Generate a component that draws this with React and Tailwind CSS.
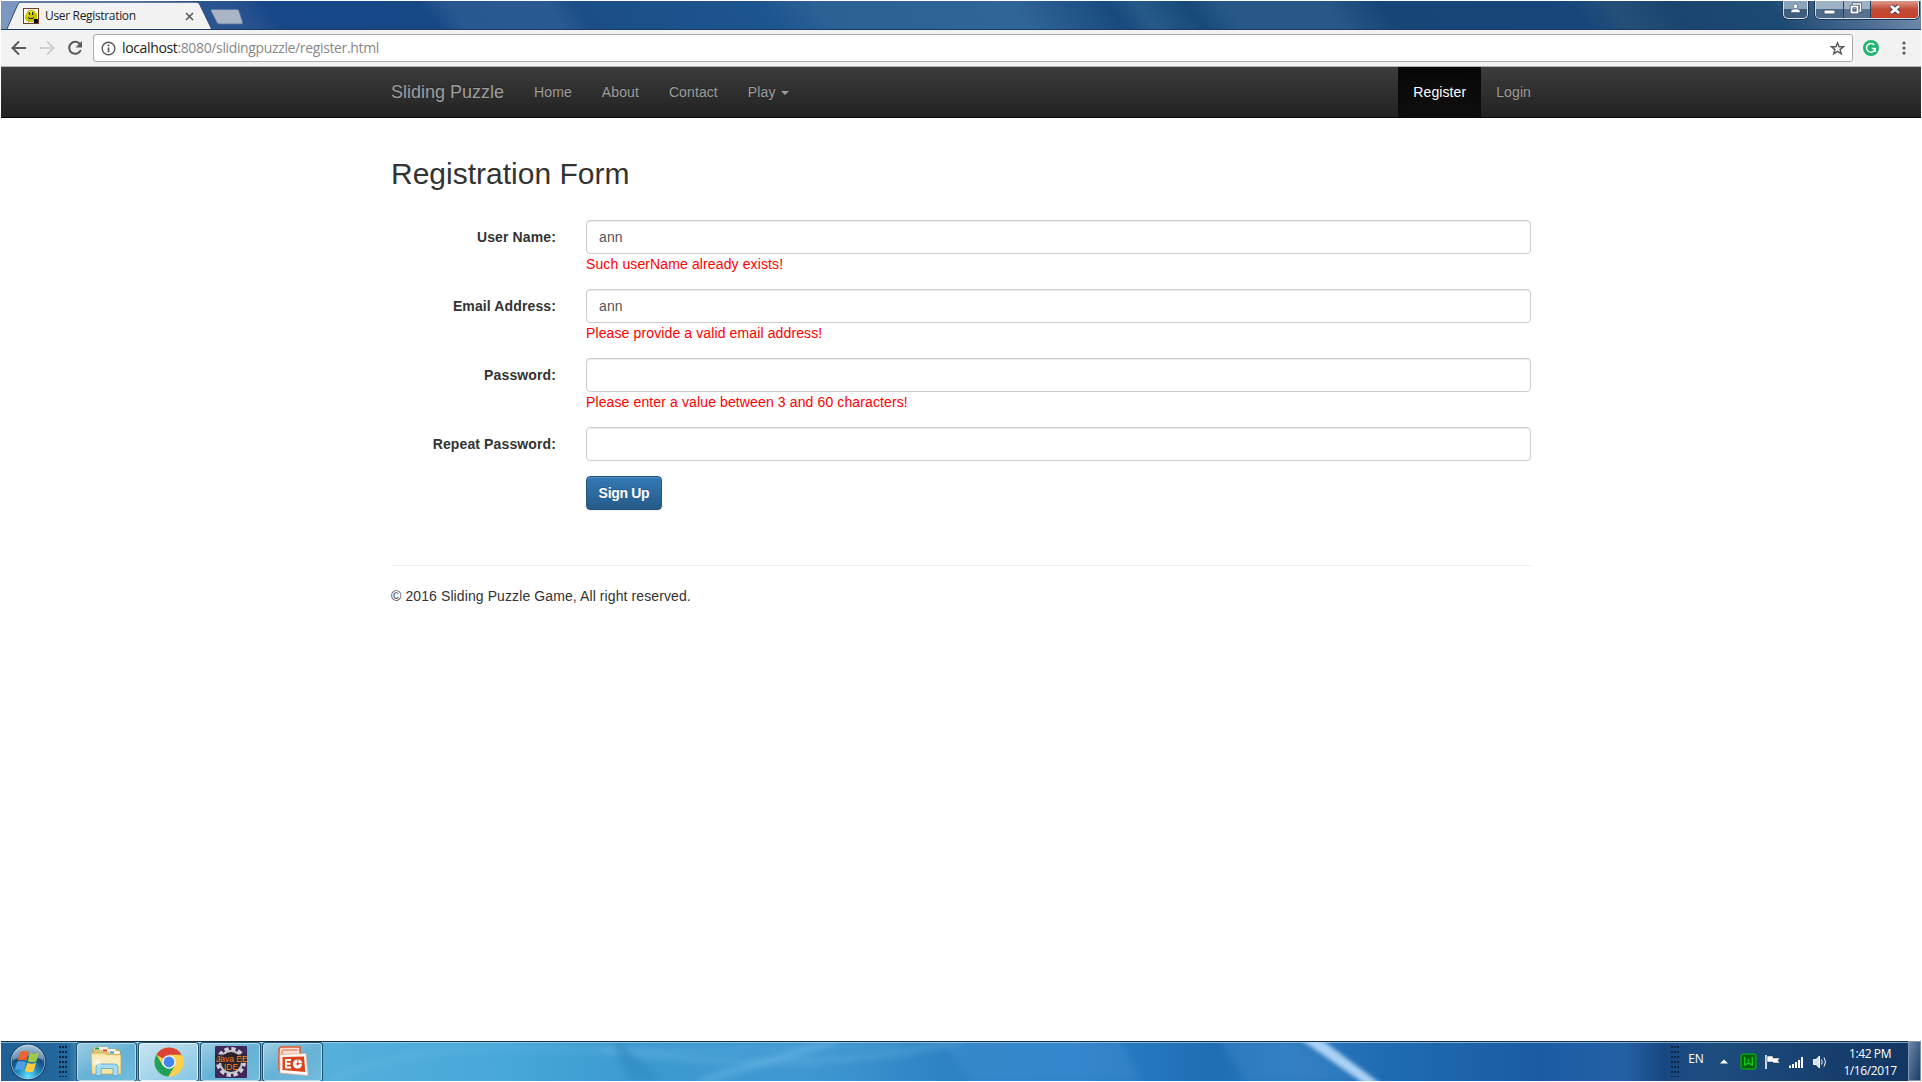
import React from "react";

const errors = {
  userName: "Such userName already exists!",
  email: "Please provide a valid email address!",
  password: "Please enter a value between 3 and 60 characters!",
};

function Favicon() {
  return (
    <svg width="16" height="16" viewBox="0 0 16 16" className="shrink-0">
      <rect x="0.5" y="0.5" width="15" height="15" fill="#fff" stroke="#7a3a1c" />
      <path d="M3 5h1V3h2V2h4v1h2v2h2v6h-2v2h-2v1H5v-1H3v-2H2V7h1z" fill="#c8c400" />
      <path d="M5 3h5v2H5zM4 6h2v3H4z" fill="#ece81a" />
      <path d="M6.500 4v3M9.500 4v3M5 9.500h1M6 10.500h4M10 9.500h1" stroke="#222" fill="none" />
      <path d="M5.500 1v14M10.500 1v14" stroke="#7a6a10" strokeOpacity="0.300" />
      <rect x="11" y="11" width="4" height="4" fill="#000" />
    </svg>
  );
}

function WindowControls() {
  return (
    <div className="absolute right-0 top-0 flex h-5 w-[140px]">
      <div className="ml-[2px] mr-[7px] flex h-[18px] w-[25px] items-center justify-center rounded-b-[5px] border border-t-0 border-[#d5e0ea] bg-linear-to-b from-[#8ba3bb] from-45% to-[#3d5c7e] to-50% shadow-[0_0_0_1px_#1c3450]">
        <svg width="11" height="11" viewBox="0 0 11 11" className="-mt-0.5">
          <path d="M3.500 3a2 2 0 0 1 4 0c0 1.700-.7 2.800-2 2.800S3.500 4.700 3.500 3zM1 9.500V8c0-1.500 2-2 4.500-2s4.500.5 4.500 2v1.500z" fill="#fff" stroke="#33455e" strokeWidth="0.500" />
        </svg>
      </div>
      <div className="flex h-[18px] w-[104px] overflow-hidden rounded-b-[5px] border border-t-0 border-[#d5e0ea] shadow-[0_0_0_1px_#1c3450]">
        <div className="flex w-[28px] items-center justify-center border-r border-[#2b425f] bg-linear-to-b from-[#9fb2c6] from-45% to-[#4d6a8a] to-50%">
          <svg width="13" height="6" className="mt-1"><rect x="1" y="1" width="11" height="4" rx="1" fill="#fff" stroke="#45546c" /></svg>
        </div>
        <div className="flex w-[27px] items-center justify-center border-r border-[#2b425f] bg-linear-to-b from-[#9fb2c6] from-45% to-[#57718f] to-50%">
          <svg width="13" height="13" viewBox="0 0 13 13" className="-ml-1 -mt-0.5" fill="none">
            <path d="M4.500 4V2h7v7H9" stroke="#45546c" strokeWidth="3" />
            <path d="M4.500 4V2h7v7H9" stroke="#fff" strokeWidth="1.500" />
            <rect x="2.500" y="4.500" width="6" height="6" stroke="#45546c" strokeWidth="3.200" />
            <rect x="2.500" y="4.500" width="6" height="6" stroke="#fff" strokeWidth="1.800" />
          </svg>
        </div>
        <div className="flex flex-1 items-center justify-center bg-linear-to-b from-[#dc9a8c] from-0% via-[#c04a34] via-50% to-[#c8432c]">
          <svg width="14" height="12" viewBox="0 0 14 12">
            <path d="M3 2l8 7M11 2l-8 7" stroke="#4a3a4c" strokeWidth="4.500" />
            <path d="M3 2l8 7M11 2l-8 7" stroke="#fff" strokeWidth="2.800" />
          </svg>
        </div>
      </div>
    </div>
  );
}

function TitleBar() {
  return (
    <div className="relative flex h-[29px] overflow-hidden border-b border-[#1c3a66] bg-[linear-gradient(54deg,#7b98c2_0%,#6285b8_8%,#2b5590_11%,#28528e_13%,#184888_14.500%,#164886_22.500%,#285890_24%,#2a5a92_29%,#1b4e86_30.500%,#1d5590_40%,#2c6195_43%,#30659a_53%,#184a7e_58%,#265a88_59.500%,#174a78_62%,#285986_64%,#285986_69%,#164578_72%,#17477a_82%,#244f78_84%,#1a4570_87%,#1c4a74_92%,#48698f_96%,#7591b0_100%)]">
      <div className="relative h-7 w-[213px] shrink-0">
        <svg width="250" height="29" viewBox="0 0 250 29" className="absolute left-0 top-0">
          <path d="M0 0h19L6 28.500H0z" fill="#7b96bf" />
          <path d="M5.500 29L17 3q1-1.800 3-1.800h175q2.500 0 3.500 1.800L211 29z" fill="#f2f2f2" stroke="#24416d" strokeWidth="0.900" />
          <path d="M211 8.500h25q1.500 0 2 1.500l3.500 11q.5 2-1 2h-22.500q-1.500 0-2-1.500L210 10q-.5-1.500 1-1.500z" fill="#aab5c5" stroke="#53749f" strokeWidth="0.800" />
        </svg>
        <div className="relative flex h-full items-center pl-[22px] pt-0.5">
          <Favicon />
          <span className="ml-1.5 w-[140px] whitespace-nowrap font-['Open_Sans',sans-serif] text-[12px] tracking-[-0.33px] text-[#222]">User Registration</span>
          <svg width="9" height="9" viewBox="0 0 9 9"><path d="M1 1l7 7M8 1L1 8" stroke="#5a5a5a" strokeWidth="1.600" /></svg>
        </div>
      </div>
      <WindowControls />
    </div>
  );
}

function AddressBar() {
  return (
    <div className="flex h-[37px] items-center border-b border-[#b0b2b1] bg-[#f2f2f2]">
      <svg width="92" height="36" viewBox="0 0 92 36" fill="none" strokeWidth="2" className="shrink-0">
        <path d="M25 18H12M18 11.500L11.500 18l6.500 6.500" stroke="#5a5a5a" />
        <path d="M39 18h13M46 11.500l6.500 6.500-6.500 6.500" stroke="#d0d0d0" />
        <path d="M79 14.200A6 6 0 1 0 79.800 20" stroke="#5a5a5a" />
        <path d="M81 11v6.500h-6.500z" fill="#5a5a5a" />
      </svg>
      <div className="flex h-7 w-[1760px] items-center rounded-[3px] border border-[#a9a9a9] bg-white pl-[7px] pr-[7px]">
        <svg width="15" height="15" viewBox="0 0 15 15" fill="none" stroke="#5a5a5a" className="shrink-0">
          <circle cx="7.500" cy="7.500" r="6.300" strokeWidth="1.400" />
          <path d="M7.500 6.500v4.700M7.500 3.600v1.700" strokeWidth="1.700" />
        </svg>
        <span className="ml-1.5 flex-1 whitespace-nowrap font-['Open_Sans',sans-serif] text-[14px] leading-5 tracking-[-0.36px] text-[#888]">
          <span className="text-[#222]">localhost</span>:8080/slidingpuzzle/register.html
        </span>
        <svg width="15" height="15" viewBox="0 0 15 15" fill="none" stroke="#5a5a5a" strokeWidth="1.400">
          <path d="M7.500 1.800l1.600 4h4.300L10 8.600l1.300 4.300-3.800-2.500-3.800 2.500L5 8.600 1.600 5.800h4.300z" />
        </svg>
      </div>
      <svg width="16" height="16" viewBox="0 0 16 16" fill="none" className="ml-[10px]">
        <circle cx="8" cy="8" r="8" fill="#21b573" />
        <path d="M11.300 5A4.400 4.400 0 1 0 12.300 8.500H8.800M12.300 8v4" stroke="#fff" strokeWidth="1.400" />
      </svg>
      <svg width="4" height="14" viewBox="0 0 4 14" fill="#5a5a5a" className="ml-[23px]">
        <circle cx="2" cy="2" r="1.600" /><circle cx="2" cy="7" r="1.600" /><circle cx="2" cy="12" r="1.600" />
      </svg>
    </div>
  );
}

function NavLink({ children, active }) {
  return (
    <a className={active
      ? "flex h-[50px] items-center bg-linear-to-b from-[#080808] to-[#0f0f0f] px-[15px] text-white shadow-[inset_0_3px_9px_rgba(0,0,0,.25)]"
      : "flex h-[50px] items-center px-[15px] text-[#9d9d9d]"}>
      {children}
    </a>
  );
}

function Navbar() {
  return (
    <nav className="h-[51px] border-b border-[#080808] bg-linear-to-b from-[#3c3c3c] to-[#222] text-[14px] tracking-[0.1px] [text-shadow:0_-1px_0_rgba(0,0,0,.25)]">
      <div className="mx-auto flex w-[1170px]">
        <a className="flex h-[50px] items-center px-[15px] text-[18px] tracking-normal text-[#9d9d9d]">Sliding Puzzle</a>
        <NavLink>Home</NavLink>
        <NavLink>About</NavLink>
        <NavLink>Contact</NavLink>
        <NavLink>
          Play
          <span className="ml-[5px] mt-0.5 border-x-4 border-t-4 border-x-transparent border-t-[#9d9d9d]" />
        </NavLink>
        <div className="ml-auto flex">
          <NavLink active>Register</NavLink>
          <NavLink>Login</NavLink>
        </div>
      </div>
    </nav>
  );
}

function Field({ label, value, error }) {
  return (
    <div className="mb-[15px] flex">
      <label className="w-[165px] shrink-0 pt-[7px] text-right font-bold">{label}</label>
      <div className="ml-[30px] min-w-0 flex-1">
        <div className="flex h-[34px] items-center rounded-[4px] border border-[#ccc] bg-white px-3 text-[#555] shadow-[inset_0_1px_1px_rgba(0,0,0,.075)]">{value}</div>
        {error && <div className="whitespace-nowrap text-[#ff0000]">{error}</div>}
      </div>
    </div>
  );
}

function Page() {
  return (
    <main className="mx-auto h-[923px] w-[1140px] pt-[39px] text-[14px] leading-5 tracking-[0.12px] text-[#333]">
      <h2 className="mb-[30px] text-[30px] leading-[33px] tracking-normal">Registration Form</h2>
      <form>
        <Field label="User Name:" value="ann" error={errors.userName} />
        <Field label="Email Address:" value="ann" error={errors.email} />
        <Field label="Password:" error={errors.password} />
        <Field label="Repeat Password:" />
        <button type="button" className="ml-[195px] h-[34px] w-[76px] rounded-[4px] border border-[#245580] bg-linear-to-b from-[#337ab7] to-[#265a88] font-bold tracking-[-0.3px] text-white [text-shadow:0_-1px_0_rgba(0,0,0,.2)] shadow-[inset_0_1px_0_rgba(255,255,255,.15),0_1px_1px_rgba(0,0,0,.075)]">Sign Up</button>
      </form>
      <hr className="mb-5 mt-[55px] border-[#eee]" />
      <footer className="tracking-[0.1px]">© 2016 Sliding Puzzle Game, All right reserved.</footer>
    </main>
  );
}

function TaskbarBackdrop() {
  return (
    <svg width="1920" height="40" viewBox="0 0 1920 40" preserveAspectRatio="none" className="absolute inset-0">
      <defs>
        <linearGradient id="bar">
          <stop offset="0" stopColor="#1f5f95" /><stop offset="0.035" stopColor="#24699e" />
          <stop offset="0.045" stopColor="#5aaad2" /><stop offset="0.17" stopColor="#55afdb" />
          <stop offset="0.26" stopColor="#48a8d8" /><stop offset="0.33" stopColor="#3c9ad0" />
          <stop offset="0.42" stopColor="#3f98d2" /><stop offset="0.49" stopColor="#2e83c4" />
          <stop offset="0.56" stopColor="#2d80c8" /><stop offset="0.63" stopColor="#1e6eb4" />
          <stop offset="0.67" stopColor="#2c78be" /><stop offset="0.73" stopColor="#1e6ab0" />
          <stop offset="0.8" stopColor="#1a5ca4" /><stop offset="0.845" stopColor="#2460a6" />
          <stop offset="0.866" stopColor="#184882" /><stop offset="0.89" stopColor="#1d4d80" />
          <stop offset="1" stopColor="#123460" />
        </linearGradient>
        <filter id="soft" x="-20%" y="-20%" width="140%" height="140%"><feGaussianBlur stdDeviation="3" /></filter>
        <filter id="glow" x="-20%" y="-20%" width="140%" height="140%"><feGaussianBlur stdDeviation="2" /></filter>
      </defs>
      <rect width="1920" height="40" fill="url(#bar)" />
      <g filter="url(#soft)">
        <path d="M330 40Q400 4 530 8T900 4" stroke="#8accea" strokeOpacity="0.200" strokeWidth="4" fill="none" />
        <path d="M600 8Q800 36 960 0" stroke="#78bee8" strokeOpacity="0.250" strokeWidth="8" fill="none" />
        <path d="M700 40L835 0" stroke="#8accee" strokeOpacity="0.300" strokeWidth="7" />
        <path d="M620 0l40 40h-30l-20-40z" fill="#2a86be" fillOpacity="0.500" />
        <path d="M940 0h180l20 40H970z" fill="#4a96d8" fillOpacity="0.300" />
        <path d="M1220 0h75l60 40h-110z" fill="#4a92d2" fillOpacity="0.300" />
      </g>
      <path d="M1296 -4h21l64 48h-16z" fill="#b2d8fa" fillOpacity="0.950" filter="url(#glow)" />
      <rect width="1920" height="1" fill="#152f45" />
      <rect y="1" width="1920" height="1" fill="#b8dcf0" fillOpacity="0.650" />
    </svg>
  );
}

function TaskButton({ children, active }) {
  return (
    <div className={active
      ? "flex h-[38px] w-[59px] items-center justify-center rounded-[3px] border border-[#e4f4fc] bg-linear-to-br from-[#c8e4f0] to-[#84c6e4] shadow-[0_0_0_1px_#24506f]"
      : "flex h-[38px] w-[59px] items-center justify-center rounded-[3px] border border-[#b4dcee] bg-linear-to-br from-[#9bcde2] via-[#65b2d6] to-[#72bcdd] shadow-[0_0_0_1px_#24506f]"}>
      {children}
    </div>
  );
}

function StartOrb() {
  return (
    <svg width="38" height="38" viewBox="0 0 38 38" className="shrink-0">
      <defs>
        <radialGradient id="orb" cx="0.5" cy="0.9" r="0.85">
          <stop offset="0" stopColor="#62e2ff" /><stop offset="0.35" stopColor="#258cc0" />
          <stop offset="0.65" stopColor="#134d80" /><stop offset="1" stopColor="#7fa9c6" />
        </radialGradient>
      </defs>
      <circle cx="19" cy="19" r="17.800" fill="url(#orb)" stroke="#12395c" />
      <circle cx="19" cy="19" r="16.800" fill="none" stroke="#a6cbe0" strokeOpacity="0.700" />
      <path d="M3.500 17A15.500 15.500 0 0 1 34.500 17Q19 10 3.500 17z" fill="#fff" fillOpacity="0.300" />
      <path d="M11 9.500q4.500-2.700 8.800-.3l-2.500 8.600q-4.200-2.200-8.800 0z" fill="#ee6430" />
      <path d="M21 9.800q4.300 2 9 0l-2.600 8.600q-4.500 2-8.800-.2z" fill="#9ccc4a" />
      <path d="M8.200 19q4.300-2 8.800.2l-2.500 8.600q-4.300-2.400-8.800-.2z" fill="#4d9ee2" />
      <path d="M18.400 19.700q4.300 2.200 8.800 0l-2.500 8.600q-4.300 2.200-8.800-.2z" fill="#fccb3a" />
    </svg>
  );
}

function FolderIcon() {
  return (
    <svg width="34" height="32" viewBox="0 0 34 32">
      <path d="M3 5V2h9l1 2h17v21H3z" fill="#e2c56c" stroke="#b9983c" strokeWidth="0.700" />
      <rect x="4" y="1" width="14" height="3" rx="1" fill="#fff" stroke="#c9a94e" strokeWidth="0.400" />
      <rect x="5" y="1.500" width="4" height="2" fill="#20a040" />
      <rect x="12" y="3" width="14" height="3" rx="1" fill="#fff" stroke="#c9a94e" strokeWidth="0.400" />
      <rect x="13" y="3.500" width="4" height="2" fill="#e04020" />
      <rect x="19" y="5" width="11" height="3" rx="1" fill="#fff" stroke="#c9a94e" strokeWidth="0.400" />
      <rect x="20" y="5.500" width="4" height="2" fill="#3a9be0" />
      <path d="M1 7h14l2 1.500h14V28H2z" fill="#f6e3a0" stroke="#c9a94e" strokeWidth="0.700" />
      <path d="M2 9l28 1v9H2z" fill="#fcf0c4" fillOpacity="0.700" />
      <path d="M6 29.500v-8q0-3.500 3.500-3.500h15q3.500 0 3.500 3.500v8h-5v-7H11v7z" fill="#a6dcf2" stroke="#5aa6ca" strokeWidth="0.800" />
      <path d="M8 12v9M4 16.500h8M5.500 14l5 5M10.500 14l-5 5" stroke="#fff" strokeWidth="0.800" />
    </svg>
  );
}

function ChromeIcon() {
  return (
    <svg width="30" height="30" viewBox="0 0 30 30">
      <circle cx="15" cy="15" r="14.500" fill="#fcd04a" />
      <path d="M15 15L2.400 7.800A14.500 14.500 0 0 1 27.600 7.800H15z" fill="#da4437" />
      <path d="M2.400 7.700A14.500 14.500 0 0 0 14.500 29.500L21.200 18.600 15 15 8.800 18.600z" fill="#1fa15d" />
      <path d="M27.900 8.200A14.500 14.500 0 0 1 14.500 29.500L21.200 18.600 15 8.200z" fill="#fcd04a" />
      <circle cx="15" cy="15" r="6.800" fill="#f5f8fa" /><circle cx="15" cy="15" r="5.400" fill="#4285f4" />
    </svg>
  );
}

function JavaIcon() {
  return (
    <svg width="32" height="32" viewBox="0 0 32 32" className="overflow-visible">
      <rect width="32" height="32" rx="1" fill="#40285c" />
      <circle cx="16" cy="16" r="13" fill="none" stroke="#d0d0d4" strokeWidth="4" strokeDasharray="4.200 2.600" />
      <circle cx="16" cy="16" r="11" fill="#2c2430" stroke="#c4c4c8" strokeWidth="2" />
      <rect y="8.500" width="32" height="8.500" fill="#2b2028" fillOpacity="0.850" />
      <text x="1" y="16" fontSize="8.500" fill="#f58220" fontFamily="Liberation Sans, sans-serif">Java EE</text>
      <text x="16" y="24" textAnchor="middle" fontSize="8.500" fill="#f58220" fontFamily="Liberation Sans, sans-serif">IDE</text>
    </svg>
  );
}

function PowerPointIcon() {
  return (
    <svg width="32" height="32" viewBox="0 0 32 32" fill="none">
      <path d="M2 4q0-3 3-3h18v8H10v16H4q-2 0-2-3z" fill="#f8ded2" stroke="#e4582c" strokeWidth="1.500" />
      <path d="M5 21V5q0-1 1-1h15" stroke="#e4582c" strokeWidth="0.900" />
      <path d="M3 8.500l26-1 2 22L3 27z" fill="#fff" stroke="#e6a48a" strokeWidth="0.700" />
      <path d="M5.500 11l21.500-.6 1.300 15.600L5.500 24z" fill="#d9441c" />
      <path d="M14 14H9v7.500h5M9 17.800h4.500" stroke="#fff" strokeWidth="1.900" />
      <circle cx="20.500" cy="18" r="4.600" fill="#fff" />
      <path d="M20.800 17.700V13a5 5 0 0 1 4.800 4.700z" fill="#fff" stroke="#d9441c" strokeWidth="0.900" />
      <circle cx="20.500" cy="18" r="1.200" fill="#d9441c" />
    </svg>
  );
}

function Grip() {
  return <div className="h-[31px] w-2 bg-[radial-gradient(circle_at_1px_1px,#0c2540_0.9px,transparent_1.200px)] [background-size:3px_5px]" />;
}

function Tray() {
  return (
    <div className="ml-auto flex h-full items-center font-['Open_Sans',sans-serif] text-[12px] text-white">
      <Grip />
      <span className="ml-px w-[32px] -translate-y-[2px] text-center text-[12px]">EN</span>
      <svg width="106" height="20" viewBox="0 0 106 20" className="ml-2" fill="none">
        <path d="M0 12.500L4 8.500 8 12.500z" fill="#fff" />
        <rect x="21" y="3" width="15" height="15" rx="2.500" fill="#06600c" stroke="#0aa014" strokeWidth="1.500" />
        <path d="M24.700 6v8l3.800-2 3.800 2V6M28.500 8v4" stroke="#12c41e" strokeWidth="1.500" />
        <path d="M46 4v14" stroke="#fff" strokeWidth="1.600" />
        <path d="M47 5h6v2h7l-2 2.500 2 2.500h-7v-1h-6z" fill="#fff" stroke="#1a2c44" strokeWidth="0.500" />
        <path d="M70 17v-2.500M73 17v-4M76 17v-6M79 17V9M82 17V6" stroke="#fff" strokeWidth="2" />
        <path d="M93.500 8.500H96L99.500 5v12L96 13.500h-2.500z" fill="#d9e2ec" stroke="#fff" />
        <path d="M101.500 8.500q1.500 2.500 0 5M104 6.500q3 4.500 0 9" stroke="#fff" />
      </svg>
      <div className="ml-[9px] mr-[3px] flex w-[70px] flex-col items-center pt-0.5 text-[12px] leading-[17px] tracking-[-0.4px]">
        <span>1:42 PM</span>
        <span>1/16/2017</span>
      </div>
      <div className="h-full w-[13px] border border-[#7d94ae] bg-linear-to-br from-[#6c88a8] to-[#1a3d69]" />
    </div>
  );
}

function Taskbar() {
  return (
    <div className="relative h-10 overflow-hidden">
      <TaskbarBackdrop />
      <div className="relative flex h-full items-center">
        <div className="ml-2 mt-px"><StartOrb /></div>
        <div className="ml-3"><Grip /></div>
        <div className="ml-[10px] mt-px flex gap-[3px]">
          <TaskButton><FolderIcon /></TaskButton>
          <TaskButton active><ChromeIcon /></TaskButton>
          <TaskButton><JavaIcon /></TaskButton>
          <TaskButton><PowerPointIcon /></TaskButton>
        </div>
        <Tray />
      </div>
    </div>
  );
}

export default function App() {
  return (
    <div className="h-[1082px] w-[1922px] overflow-hidden bg-white p-px font-['Liberation_Sans',Arial,sans-serif]">
      <TitleBar />
      <AddressBar />
      <Navbar />
      <Page />
      <Taskbar />
    </div>
  );
}
